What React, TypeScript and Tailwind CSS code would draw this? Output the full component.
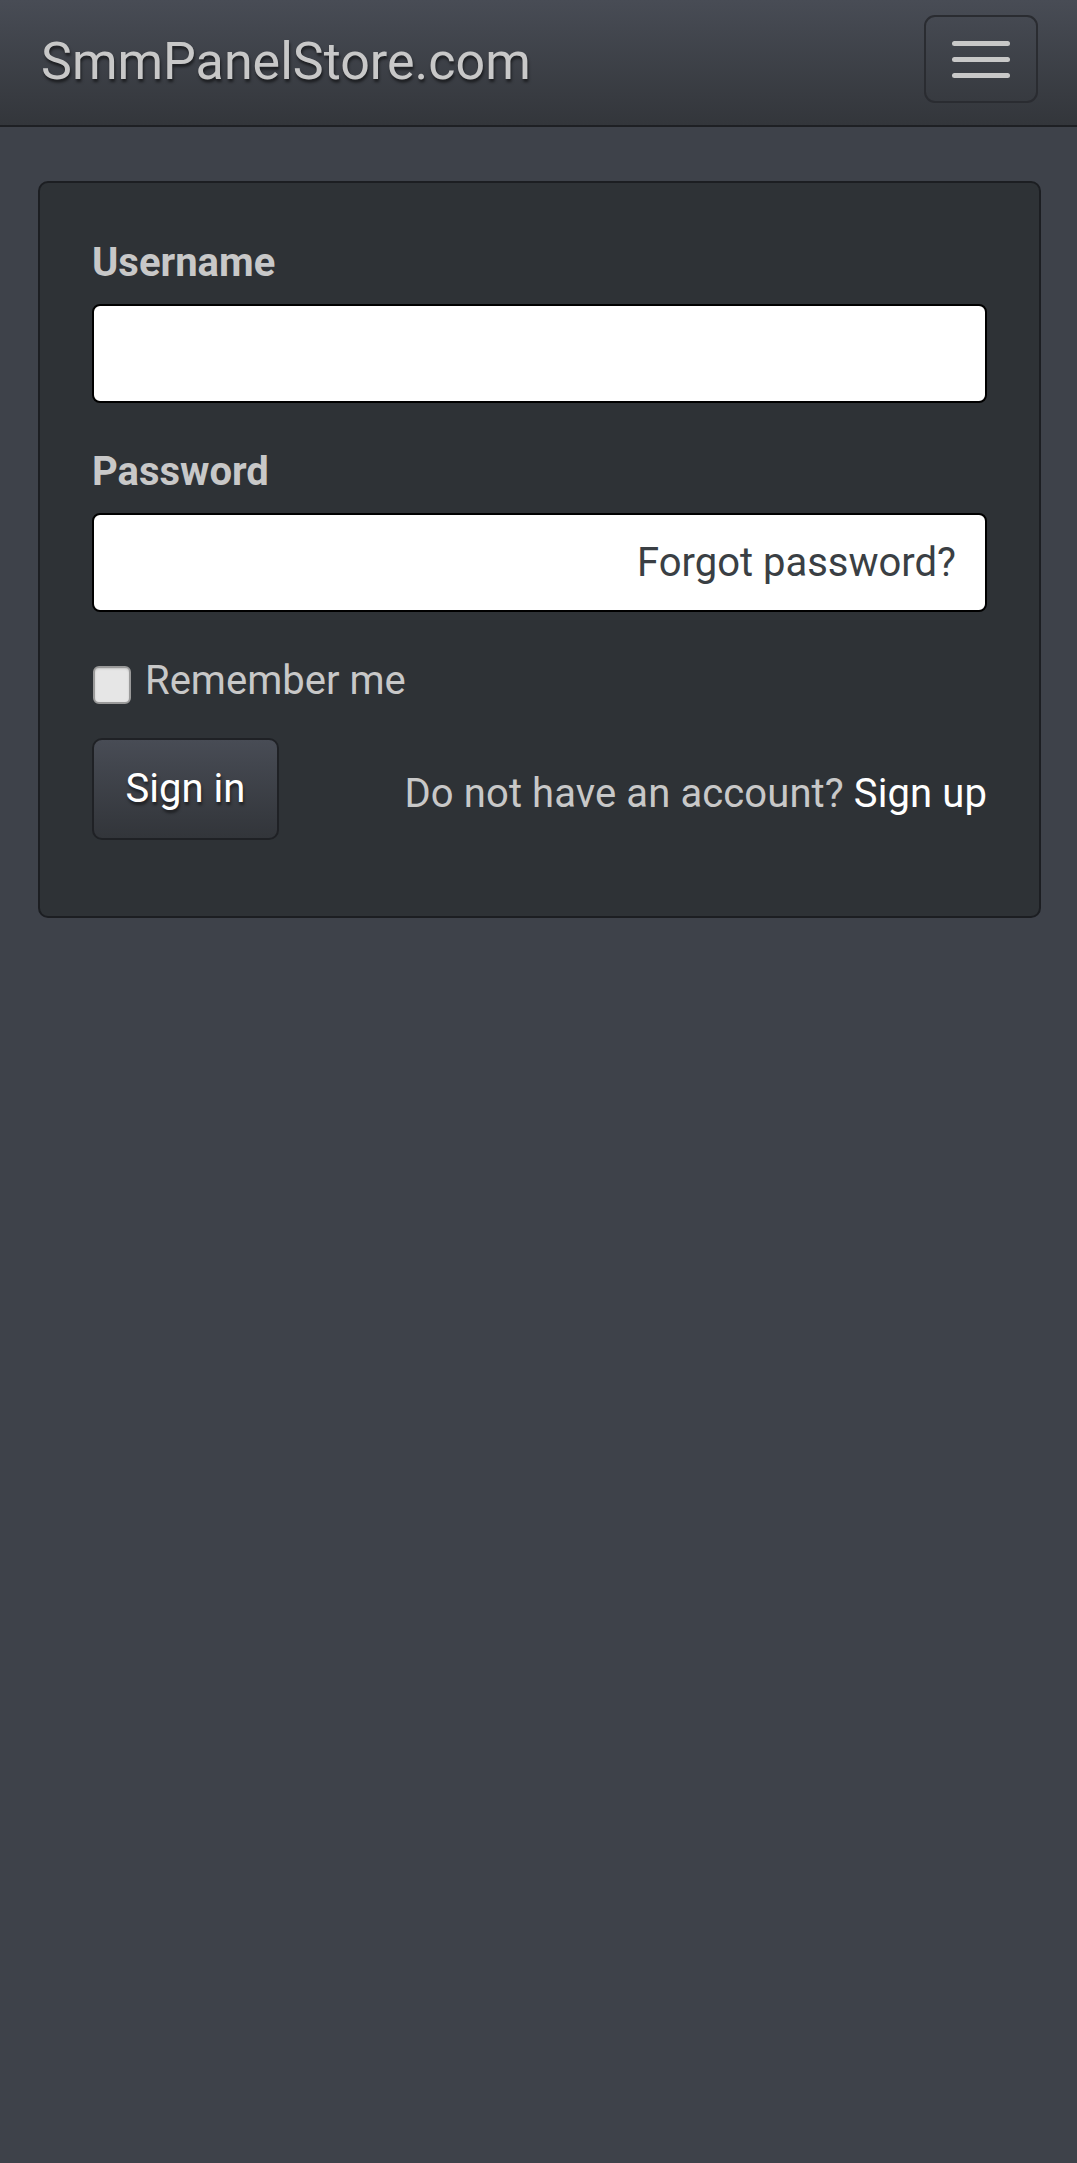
export default function App() {
  return (
    <main
      className="min-h-[2163px] w-full bg-[#3e424a] text-[#c8c8c8]"
      style={{ fontFamily: 'Roboto, "Noto Sans", Arial, sans-serif' }}
    >
      {/* Navbar */}
      <nav className="flex h-[127px] items-start justify-between border-b-2 border-[#1e2024] bg-gradient-to-b from-[#484c55] to-[#33363b] pl-[41px] pr-[39px]">
        <a
          href="#"
          className="mt-[36px] text-[52px] leading-none text-[#c8c8c8] [text-shadow:1px_3px_3px_rgba(0,0,0,0.55)]"
        >
          SmmPanelStore.com
        </a>
        <button
          type="button"
          className="mt-[15px] flex h-[88px] w-[114px] flex-col items-center justify-center gap-[11px] rounded-[11px] border-2 border-[#2a2c31]"
        >
          <span className="block h-[5px] w-[58px] rounded-full bg-[#c8c8c8]" />
          <span className="block h-[5px] w-[58px] rounded-full bg-[#c8c8c8]" />
          <span className="block h-[5px] w-[58px] rounded-full bg-[#c8c8c8]" />
        </button>
      </nav>

      {/* Login well */}
      <div className="ml-[38px] mr-[36px] mt-[54px] rounded-[10px] border-2 border-[#1c1e22] bg-[#2e3236] px-[52px] pb-[76px] pt-[51px]">
        <form>
          <div className="mb-[40px]">
            <label className="mb-[13px] block text-[40px] font-bold leading-[57px] text-[#c8c8c8]">
              Username
            </label>
            <input
              type="text"
              className="block h-[99px] w-full rounded-[8px] border-2 border-black bg-white px-[34px] text-[40px] text-[#272b30] outline-none"
            />
          </div>

          <div className="mb-[40px]">
            <label className="mb-[13px] block text-[40px] font-bold leading-[57px] text-[#c8c8c8]">
              Password
            </label>
            <div className="flex h-[99px] w-full items-center rounded-[8px] border-2 border-black bg-white">
              <input
                type="password"
                className="h-full min-w-0 flex-1 bg-transparent px-[34px] text-[40px] text-[#272b30] outline-none"
              />
              <a href="#" className="pr-[29px] text-[40px] leading-none text-[#3a3f44]">
                Forgot password?
              </a>
            </div>
          </div>

          <label className="flex items-start">
            <input
              type="checkbox"
              className="ml-[1px] mt-[14px] h-[38px] w-[38px] appearance-none rounded-[6px] border-2 border-[#9a9a9a] bg-[#e6e6e6] shadow-[inset_0_1px_2px_rgba(0,0,0,0.15)]"
            />
            <span className="ml-[14px] text-[40px] leading-[57px] text-[#c8c8c8]">Remember me</span>
          </label>

          <div className="mt-[29px] flex items-start justify-between">
            <button
              type="submit"
              className="h-[102px] w-[187px] rounded-[10px] border-2 border-[#1f2125] bg-gradient-to-b from-[#484c55] to-[#32353a] text-[40px] text-white [text-shadow:1px_3px_3px_rgba(0,0,0,0.5)]"
            >
              Sign in
            </button>
            <p className="mt-[36px] text-[40px] leading-none tracking-[0.1px] text-[#c8c8c8]">
              Do not have an account?{' '}
              <a href="#" className="text-white">
                Sign up
              </a>
            </p>
          </div>
        </form>
      </div>
    </main>
  )
}
